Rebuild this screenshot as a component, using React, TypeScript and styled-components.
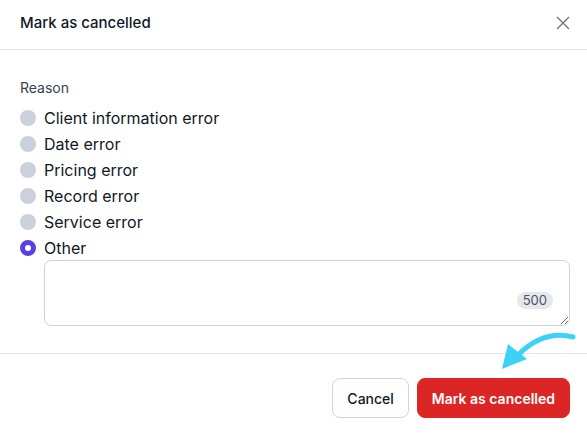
import styled, { createGlobalStyle } from "styled-components";

const GlobalStyle = createGlobalStyle`
  html, body {
    margin: 0;
    padding: 0;
    background: #ffffff;
  }
  body {
    font-family: Inter, "Noto Sans", sans-serif;
    color: #111827;
    -webkit-font-smoothing: antialiased;
  }
`;

const Dialog = styled.div`
  position: relative;
  width: 587px;
  height: 435px;
  background: #ffffff;
  display: flex;
  flex-direction: column;
`;

const Header = styled.div`
  height: 50px;
  box-sizing: border-box;
  display: flex;
  align-items: flex-start;
  justify-content: space-between;
  padding: 13px 16px 0 20px;
  border-bottom: 1px solid #e5e7eb;
`;

const Title = styled.h2`
  margin: 0;
  font-size: 15px;
  line-height: 20px;
  font-weight: 500;
  color: #111827;
`;

const CloseBtn = styled.button`
  border: none;
  background: none;
  padding: 0;
  width: 16px;
  height: 16px;
  margin-top: 2px;
  color: #6b7280;
  display: flex;
  align-items: center;
  justify-content: center;
  cursor: pointer;
`;

const Body = styled.div`
  padding: 28px 17px 27px 20px;
  border-bottom: 1px solid #e5e7eb;
  display: flex;
  flex-direction: column;
`;

const Label = styled.div`
  font-size: 14px;
  line-height: 20px;
  color: #374151;
  margin-bottom: 8px;
`;

const Options = styled.div`
  display: flex;
  flex-direction: column;
  gap: 2px;
`;

const Option = styled.label`
  display: flex;
  align-items: center;
  gap: 8px;
  height: 24px;
  font-size: 16px;
  color: #111827;
  cursor: pointer;
`;

const Dot = styled.span<{ $checked?: boolean }>`
  width: 16px;
  height: 16px;
  border-radius: 50%;
  box-sizing: border-box;
  flex-shrink: 0;
  background: ${(p) => (p.$checked ? "#ffffff" : "#cbd1db")};
  border: ${(p) => (p.$checked ? "5px solid #5b3fe0" : "none")};
`;

const AreaWrap = styled.div`
  position: relative;
  margin-left: 24px;
`;

const TextArea = styled.textarea`
  display: block;
  width: 100%;
  height: 66px;
  box-sizing: border-box;
  border: 1px solid #cdd2db;
  border-radius: 7px;
  padding: 8px 12px;
  font-family: inherit;
  font-size: 14px;
  resize: vertical;
  outline: none;
`;

const Counter = styled.span`
  position: absolute;
  right: 17px;
  bottom: 17px;
  height: 17px;
  padding: 0 6px;
  border-radius: 9px;
  background: #e5e7eb;
  color: #4b5563;
  font-size: 13px;
  line-height: 17px;
`;

const Footer = styled.div`
  display: flex;
  justify-content: flex-end;
  gap: 8px;
  padding: 24px 17px 0 20px;
`;

const Button = styled.button<{ $danger?: boolean }>`
  height: 40px;
  padding: 0 14px;
  border-radius: 8px;
  font-family: inherit;
  font-size: 14px;
  font-weight: ${(p) => (p.$danger ? 600 : 500)};
  color: ${(p) => (p.$danger ? "#ffffff" : "#111827")};
  background: ${(p) => (p.$danger ? "#dc2626" : "#ffffff")};
  border: 1px solid ${(p) => (p.$danger ? "#dc2626" : "#d1d5db")};
  cursor: pointer;
`;

const Pointer = styled.svg`
  position: absolute;
  left: 0;
  top: 0;
  pointer-events: none;
`;

const reasons = [
  "Client information error",
  "Date error",
  "Pricing error",
  "Record error",
  "Service error",
  "Other",
];

export default function App() {
  return (
    <>
      <GlobalStyle />
      <Dialog>
        <Header>
          <Title>Mark as cancelled</Title>
          <CloseBtn aria-label="Close">
            <svg width="14" height="14" viewBox="0 0 14 14" fill="none">
              <path d="M1 1l12 12M13 1L1 13" stroke="currentColor" strokeWidth="1.3" />
            </svg>
          </CloseBtn>
        </Header>
        <Body>
          <Label>Reason</Label>
          <Options>
            {reasons.map((r) => (
              <Option key={r}>
                <Dot $checked={r === "Other"} />
                {r}
              </Option>
            ))}
          </Options>
          <AreaWrap>
            <TextArea />
            <Counter>500</Counter>
          </AreaWrap>
        </Body>
        <Footer>
          <Button>Cancel</Button>
          <Button $danger>Mark as cancelled</Button>
        </Footer>
        <Pointer width="587" height="435" viewBox="0 0 587 435">
          <path
            d="M573 337 C553 332 535 338 518 355"
            stroke="#3cd2f8"
            strokeWidth="5"
            fill="none"
            strokeLinecap="round"
          />
          <path d="M508 344 L527 359 L502 369 Z" fill="#3cd2f8" />
        </Pointer>
      </Dialog>
    </>
  );
}
